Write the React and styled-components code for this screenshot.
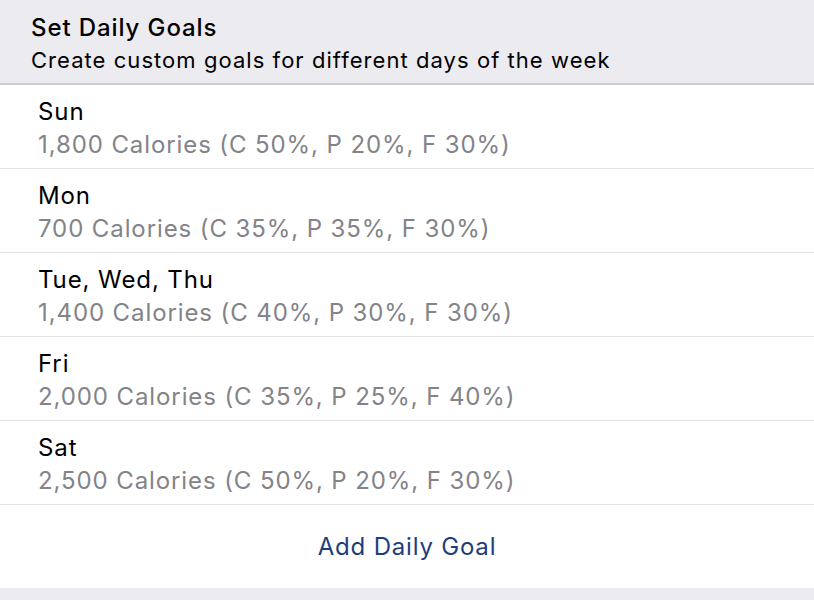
import React from "react";
import styled, { createGlobalStyle } from "styled-components";

const Global = createGlobalStyle`
  html, body { margin: 0; padding: 0; background: #ebebf0; }
  body { font-family: Inter, "Liberation Sans", Arial, sans-serif; -webkit-font-smoothing: antialiased; }
`;

const Page = styled.div`
  width: 814px;
  height: 600px;
  background: #ebebf0;
  overflow: hidden;
`;

const Header = styled.header`
  display: flex;
  flex-direction: column;
  padding: 12px 31px 0;
  height: 85px;
  box-sizing: border-box;
  border-bottom: 2px solid #cdcdd1;
  background: #ebebf0;
`;

const HeaderTitle = styled.div`
  font-size: 24px;
  font-weight: 500;
  color: #000;
  line-height: 32px;
  letter-spacing: 0.9px;
`;

const HeaderSub = styled.div`
  font-size: 22px;
  color: #000;
  line-height: 32px;
  letter-spacing: 1.05px;
`;

const List = styled.div`
  display: flex;
  flex-direction: column;
  background: #fff;
`;

const Row = styled.div`
  height: 84px;
  box-sizing: border-box;
  padding: 10px 38px 0;
  border-bottom: 1px solid #e3e3e6;
  display: flex;
  flex-direction: column;
`;

const RowTitle = styled.div`
  font-size: 24px;
  color: #000;
  line-height: 33px;
  letter-spacing: 0.9px;
`;

const RowSub = styled.div`
  font-size: 24px;
  color: #838388;
  line-height: 33px;
  letter-spacing: 0.9px;
`;

const AddButton = styled.button`
  height: 83px;
  border: none;
  background: #fff;
  font-family: inherit;
  font-size: 24px;
  letter-spacing: 0.8px;
  color: #1e3e7b;
  padding: 0;
  cursor: pointer;
`;

const goals = [
  { day: "Sun", desc: "1,800 Calories (C 50%, P 20%, F 30%)" },
  { day: "Mon", desc: "700 Calories (C 35%, P 35%, F 30%)" },
  { day: "Tue, Wed, Thu", desc: "1,400 Calories (C 40%, P 30%, F 30%)" },
  { day: "Fri", desc: "2,000 Calories (C 35%, P 25%, F 40%)" },
  { day: "Sat", desc: "2,500 Calories (C 50%, P 20%, F 30%)" },
];

export default function App() {
  return (
    <Page>
      <Global />
      <Header>
        <HeaderTitle>Set Daily Goals</HeaderTitle>
        <HeaderSub>Create custom goals for different days of the week</HeaderSub>
      </Header>
      <List>
        {goals.map((g) => (
          <Row key={g.day}>
            <RowTitle>{g.day}</RowTitle>
            <RowSub>{g.desc}</RowSub>
          </Row>
        ))}
        <AddButton>Add Daily Goal</AddButton>
      </List>
    </Page>
  );
}
